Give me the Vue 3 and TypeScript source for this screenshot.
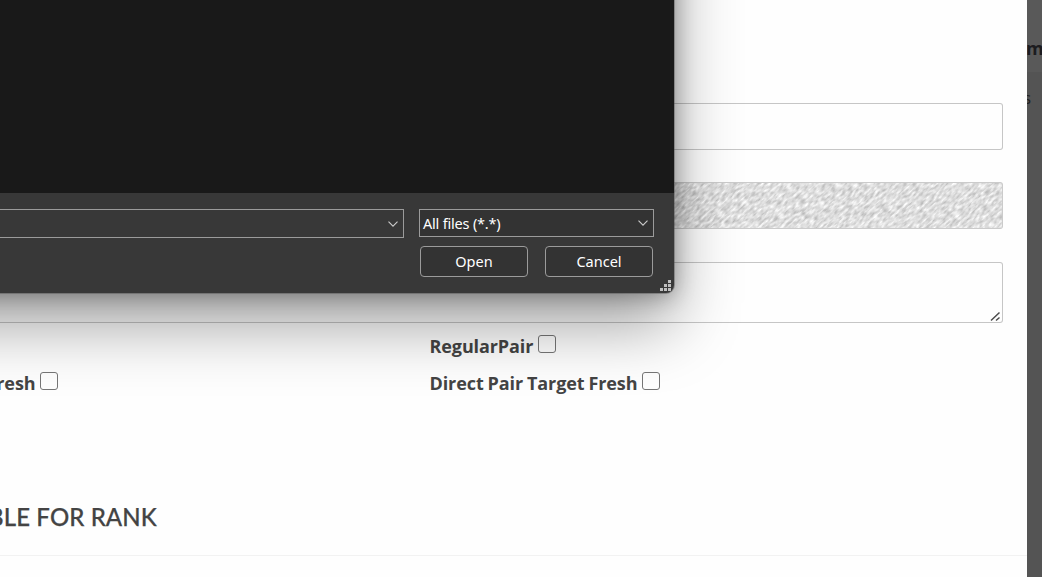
<script setup lang="ts">
const checks = [
  { left: '', right: 'RegularPair' },
  { left: 'Fresh', right: 'Direct Pair Target Fresh' },
]
const gripDots = [
  [8, 0], [4, 4], [8, 4], [0, 8], [4, 8], [8, 8],
]
</script>

<template>
  <div class="screen">
    <main class="modal">
      <div class="form">
        <div class="field"></div>
        <div class="field patterned">
          <svg width="100%" height="100%" preserveAspectRatio="none">
            <filter id="weave" x="0" y="0" width="100%" height="100%" color-interpolation-filters="sRGB">
              <feTurbulence type="fractalNoise" baseFrequency="0.16 0.42" numOctaves="2" seed="8" />
              <feColorMatrix values="0.45 0 0 0 0.645  0.45 0 0 0 0.645  0.45 0 0 0 0.645  0 0 0 0 1" />
            </filter>
            <rect x="-100" y="-100" width="1300" height="1000" transform="rotate(-42)" filter="url(#weave)" />
          </svg>
        </div>
        <div class="field area">
          <svg class="resize" width="11" height="11" viewBox="0 0 11 11">
            <path d="M1 9.5 L9.5 1.5 M6 9.5 L9.5 6.5" />
          </svg>
        </div>
      </div>
      <div class="checks">
        <div v-for="row in checks" :key="row.right" class="check-row">
          <label class="check left"><template v-if="row.left"><span>{{ row.left }}</span><i class="box"></i></template></label>
          <label class="check"><span>{{ row.right }}</span><i class="box"></i></label>
        </div>
      </div>
      <div class="title-row">
        <h2>TABLE FOR RANK</h2>
      </div>
    </main>
    <aside class="backdrop">
      <div class="strip top"><b>m</b></div>
      <div class="strip rest"><span>s</span></div>
    </aside>

    <section class="dialog">
      <div class="files"></div>
      <div class="footer">
        <div class="line">
          <div class="combo name">
            <svg width="10" height="6" viewBox="0 0 10 6"><path d="M.5 .7 L5 5.2 L9.5 .7" /></svg>
          </div>
          <div class="combo type">
            <span>All files (*.*)</span>
            <svg width="10" height="6" viewBox="0 0 10 6"><path d="M.5 .7 L5 5.2 L9.5 .7" /></svg>
          </div>
        </div>
        <div class="actions">
          <button>Open</button>
          <button>Cancel</button>
        </div>
      </div>
      <svg class="grip" width="11" height="11" viewBox="0 0 11 11">
        <rect v-for="(d, i) in gripDots" :key="i" :x="d[0]" :y="d[1]" width="3" height="3" />
      </svg>
    </section>
  </div>
</template>

<style>
body { margin: 0; overflow: hidden; }
</style>

<style scoped>
* { box-sizing: border-box; }
.screen {
  position: relative;
  display: flex;
  width: 1042px;
  height: 577px;
  overflow: hidden;
  background: #fefefe;
  color: #444;
  font-family: "Open Sans", sans-serif;
}
.modal { width: 1027px; background: #fefefe; }
.form {
  display: flex;
  flex-direction: column;
  padding: 103px 24px 0 0;
}
.field {
  height: 47px;
  margin-bottom: 32px;
  border: 1px solid #c6c6c6;
  border-left: 0;
  border-radius: 0 3px 3px 0;
  overflow: hidden;
}
.patterned { margin-bottom: 33px; border-color: #cbcbcb; background: #dcdcdc; }
.patterned svg { display: block; }
.area {
  display: flex;
  align-items: flex-end;
  justify-content: flex-end;
  height: 61px;
  margin: 0;
  padding: 0 1px 0 0;
}
.resize { fill: none; stroke: #4c4c4c; stroke-width: 1.5; }
.checks { padding-top: 5px; }
.check-row { display: flex; height: 37px; }
.check {
  display: flex;
  align-items: flex-start;
  gap: 5px;
  font-size: 18px;
  font-weight: 700;
  line-height: 37px;
  letter-spacing: -0.1px;
  word-spacing: -0.6px;
  white-space: nowrap;
}
.check.left { width: 429.5px; }
.check.left span { margin-left: -13.5px; }
.box {
  width: 18px;
  height: 18px;
  margin-top: 7px;
  border: 1.4px solid #767676;
  border-radius: 3px;
  background: transparent;
}
.title-row {
  display: flex;
  align-items: center;
  height: 77px;
  margin-top: 77px;
  border-bottom: 1px solid #f2f2f2;
}
h2 {
  margin: 0 0 1px -41px;
  font-family: Lato, sans-serif;
  font-size: 24px;
  font-weight: 500;
  line-height: 30px;
  letter-spacing: 0.1px;
  -webkit-text-stroke: 0.25px #444;
  white-space: nowrap;
}
.backdrop { width: 15px; background: #545454; overflow: hidden; color: #222; }
.strip { display: flex; overflow: hidden; }
.top { height: 72px; padding-top: 36px; background: #595959; }
.top b { margin-left: -1px; font-size: 18px; line-height: 24px; color: #1c1c1f; }
.rest { height: 505px; padding-top: 14px; }
.rest span { margin-left: -4px; font-size: 17px; line-height: 24px; }

.dialog {
  position: absolute;
  left: -200px;
  top: -200px;
  width: 874px;
  height: 493px;
  border-radius: 8px;
  background: #383838;
  box-shadow: 0 0 0 1px rgba(75, 75, 75, 0.4), 0 2px 21px rgba(0, 0, 0, 0.32), 0 32px 64px rgba(0, 0, 0, 0.37);
  color: #fff;
  font-family: "Noto Sans", sans-serif;
  font-size: 14.5px;
}
.files { height: 393px; border-radius: 8px 8px 0 0; background: #191919; }
.footer { padding: 16px 20px 0 0; }
.line { display: flex; justify-content: flex-end; gap: 15px; height: 29px; }
.combo {
  display: flex;
  align-items: center;
  justify-content: flex-end;
  border: 1px solid #9b9b9b;
  padding: 0 5px 0 3px;
}
.name { width: 604px; height: 29px; }
.type { width: 235px; height: 28px; justify-content: space-between; background: #333; }
.combo svg { fill: none; stroke: #ccc; stroke-width: 1.1; }
.combo span { letter-spacing: -0.2px; }
.actions { display: flex; justify-content: flex-end; gap: 17px; padding: 8px 1px 0 0; }
button {
  width: 108px;
  height: 31px;
  padding: 0 0 2px;
  border: 1px solid #9b9b9b;
  border-radius: 4px;
  background: #333;
  color: #fff;
  font: inherit;
}
.grip { position: absolute; right: 3px; bottom: 2px; fill: #bfbfbf; }
</style>
